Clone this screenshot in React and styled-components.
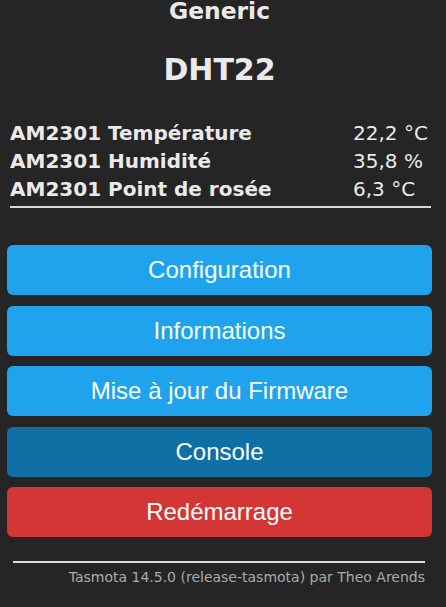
import React from "react";
import styled, { createGlobalStyle } from "styled-components";

const Global = createGlobalStyle`
  html, body {
    margin: 0;
    padding: 0;
    background: #252525;
  }
  body {
    font-family: "DejaVu Sans", Verdana, sans-serif;
    color: #eaeaea;
    overflow: hidden;
  }
`;

const Page = styled.div`
  display: flex;
  flex-direction: column;
  padding: 0 14px 0 7px;
  height: 607px;
  box-sizing: border-box;
`;

const Title = styled.h3`
  margin: 0;
  font-size: 23.4px;
  line-height: 23px;
  font-weight: bold;
  text-align: center;
`;

const Device = styled.h2`
  margin: 28.5px 0 0;
  font-size: 30px;
  line-height: 36px;
  font-weight: bold;
  text-align: center;
`;

const Sensors = styled.div`
  display: flex;
  flex-direction: column;
  margin: 31.8px 0 0 3px;
  width: 421px;
`;

const Row = styled.div`
  display: grid;
  grid-template-columns: 1fr 78px;
  font-size: 20px;
  line-height: 28px;
`;

const Label = styled.span`
  font-weight: bold;
  white-space: nowrap;
`;

const Value = styled.span`
  white-space: nowrap;
`;

const Rule = styled.hr`
  border: 0;
  border-top: 2px solid ${(p) => p.$color || "#d8d8d8"};
  margin: ${(p) => p.$margin || "2.5px 0 0"};
  width: 100%;
`;

const Menu = styled.div`
  display: flex;
  flex-direction: column;
  gap: 10.5px;
  margin-top: 37.5px;
`;

const Button = styled.button`
  border: 0;
  border-radius: 6px;
  height: 50px;
  line-height: 50px;
  padding: 0;
  width: 100%;
  font-family: "Liberation Sans", Arial, sans-serif;
  font-size: 24px;
  color: #faffff;
  background: ${(p) => p.$bg || "#1fa3ec"};
  cursor: pointer;
`;

const Footer = styled.div`
  display: flex;
  flex-direction: column;
  align-items: flex-end;
  margin: 23.5px 0 0 6px;
  width: 412px;
`;

const Credit = styled.a`
  margin-top: 6.5px;
  font-size: 14px;
  line-height: 17px;
  color: #aaa;
  text-decoration: none;
  white-space: nowrap;
`;

const readings = [
  ["AM2301 Température", "22,2 °C"],
  ["AM2301 Humidité", "35,8 %"],
  ["AM2301 Point de rosée", "6,3 °C"],
];

const buttons = [
  ["Configuration"],
  ["Informations"],
  ["Mise à jour du Firmware"],
  ["Console", "#0e70a4"],
  ["Redémarrage", "#d43535"],
];

export default function App() {
  return (
    <>
      <Global />
      <Page>
        <Title>Generic</Title>
        <Device>DHT22</Device>
        <Sensors>
          {readings.map(([label, value]) => (
            <Row key={label}>
              <Label>{label}</Label>
              <Value>{value}</Value>
            </Row>
          ))}
          <Rule />
        </Sensors>
        <Menu>
          {buttons.map(([text, bg]) => (
            <Button key={text} $bg={bg}>
              {text}
            </Button>
          ))}
        </Menu>
        <Footer>
          <Rule $color="#e0e0e0" $margin="0" />
          <Credit href="#">Tasmota 14.5.0 (release-tasmota) par Theo Arends</Credit>
        </Footer>
      </Page>
    </>
  );
}
